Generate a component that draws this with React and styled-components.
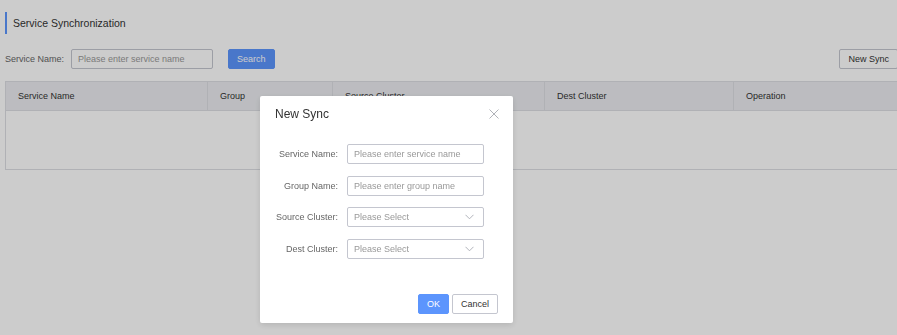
import styled, { createGlobalStyle } from "styled-components";

const GlobalStyle = createGlobalStyle`
  html, body {
    margin: 0;
    padding: 0;
    background: #ffffff;
    overflow: hidden;
  }
  body {
    font-family: "Liberation Sans", Arial, sans-serif;
    color: #333333;
  }
  * {
    box-sizing: border-box;
  }
`;

const PRIMARY = "#5c95fd";
const BORDER = "#dcdee3";

const Page = styled.div`
  width: 898px;
  height: 335px;
  padding: 12px 0 0 5px;
`;

const Title = styled.div`
  height: 22px;
  display: flex;
  align-items: center;
  border-left: 2px solid ${PRIMARY};
  padding-left: 6px;
  font-size: 10.5px;
  color: #333;
`;

const SearchRow = styled.div`
  margin-top: 15px;
  height: 20px;
  display: flex;
  align-items: center;
`;

const Label = styled.span`
  font-size: 9px;
  color: #666;
  margin-right: 7px;
`;

const Input = styled.div`
  width: ${(p) => p.$w || 142}px;
  height: 20px;
  border: 1px solid #c4c6cf;
  border-radius: 2px;
  background: #fff;
  display: flex;
  align-items: center;
  padding: 0 6px;
  font-size: 9px;
  color: #999;
`;

const Button = styled.div`
  height: 20px;
  padding: 0 ${(p) => p.$pad || 8}px;
  border-radius: 2px;
  display: flex;
  align-items: center;
  justify-content: center;
  font-size: 9px;
  border: 1px solid ${(p) => (p.$primary ? PRIMARY : "#c4c6cf")};
  background: ${(p) => (p.$primary ? PRIMARY : "#fff")};
  color: ${(p) => (p.$primary ? "#fff" : "#333")};
`;

const Spacer = styled.div`
  flex: 1;
`;

const SearchBtnWrap = styled.div`
  margin-left: 15px;
`;

const Table = styled.div`
  margin-top: 12px;
  width: 900px;
  border: 1px solid ${BORDER};
`;

const HeaderRow = styled.div`
  display: grid;
  grid-template-columns: 201px 125px 212px 189px 1fr;
  height: 29px;
  background: #ebecf0;
  border-bottom: 1px solid ${BORDER};
`;

const HeaderCell = styled.div`
  display: flex;
  align-items: center;
  padding-left: 12px;
  font-size: 9px;
  color: #333;
  border-left: ${(p) => (p.$first ? "none" : `1px solid ${BORDER}`)};
`;

const TableBody = styled.div`
  height: 58px;
`;

const Mask = styled.div`
  position: fixed;
  inset: 0;
  background: rgba(0, 0, 0, 0.2);
`;

const Dialog = styled.div`
  position: fixed;
  left: 260px;
  top: 96px;
  width: 253px;
  height: 227px;
  background: #fff;
  border-radius: 2px;
  box-shadow: 0 2px 6px rgba(0, 0, 0, 0.12);
  display: flex;
  flex-direction: column;
`;

const DialogHeader = styled.div`
  height: 36px;
  display: flex;
  align-items: center;
  justify-content: space-between;
  padding: 0 13px 0 15px;
  font-size: 12px;
  color: #333;
`;

const Close = styled.div`
  width: 12px;
  height: 12px;
  display: flex;
  align-items: center;
  justify-content: center;
`;

const Form = styled.div`
  margin-top: 12px;
  display: flex;
  flex-direction: column;
  gap: 11.6px;
`;

const FormRow = styled.div`
  display: grid;
  grid-template-columns: 78px 137px;
  column-gap: 9px;
  align-items: center;
`;

const FormLabel = styled.div`
  text-align: right;
  font-size: 9px;
  color: #666;
`;

const Select = styled(Input)`
  justify-content: space-between;
  padding-right: 9px;
`;

const Footer = styled.div`
  margin-top: auto;
  display: flex;
  justify-content: flex-end;
  gap: 3px;
  padding: 0 15px 9px 0;
`;

const Chevron = () => (
  <svg width="9" height="6" viewBox="0 0 9 6" fill="none">
    <path d="M0.5 0.8 L4.5 4.8 L8.5 0.8" stroke="#a8aab3" strokeWidth="0.9" />
  </svg>
);

const CloseIcon = () => (
  <svg width="10" height="10" viewBox="0 0 10 10" fill="none">
    <path d="M0.5 0.5 L9.5 9.5 M9.5 0.5 L0.5 9.5" stroke="#b0b2b8" strokeWidth="1" />
  </svg>
);

const columns = ["Service Name", "Group", "Source Cluster", "Dest Cluster", "Operation"];

const fields = [
  { label: "Service Name:", placeholder: "Please enter service name" },
  { label: "Group Name:", placeholder: "Please enter group name" },
  { label: "Source Cluster:", placeholder: "Please Select", select: true },
  { label: "Dest Cluster:", placeholder: "Please Select", select: true },
];

export default function App() {
  return (
    <>
      <GlobalStyle />
      <Page>
        <Title>Service Synchronization</Title>
        <SearchRow>
          <Label>Service Name:</Label>
          <Input $w={142}>Please enter service name</Input>
          <SearchBtnWrap>
            <Button $primary>Search</Button>
          </SearchBtnWrap>
          <Spacer />
          <Button>New Sync</Button>
        </SearchRow>
        <Table>
          <HeaderRow>
            {columns.map((c, i) => (
              <HeaderCell key={c} $first={i === 0}>
                {c}
              </HeaderCell>
            ))}
          </HeaderRow>
          <TableBody />
        </Table>
      </Page>
      <Mask />
      <Dialog>
        <DialogHeader>
          New Sync
          <Close>
            <CloseIcon />
          </Close>
        </DialogHeader>
        <Form>
          {fields.map((f) =>
            <FormRow key={f.label}>
              <FormLabel>{f.label}</FormLabel>
              {f.select ? (
                <Select $w={137}>
                  {f.placeholder}
                  <Chevron />
                </Select>
              ) : (
                <Input $w={137}>{f.placeholder}</Input>
              )}
            </FormRow>
          )}
        </Form>
        <Footer>
          <Button $primary>OK</Button>
          <Button>Cancel</Button>
        </Footer>
      </Dialog>
    </>
  );
}
